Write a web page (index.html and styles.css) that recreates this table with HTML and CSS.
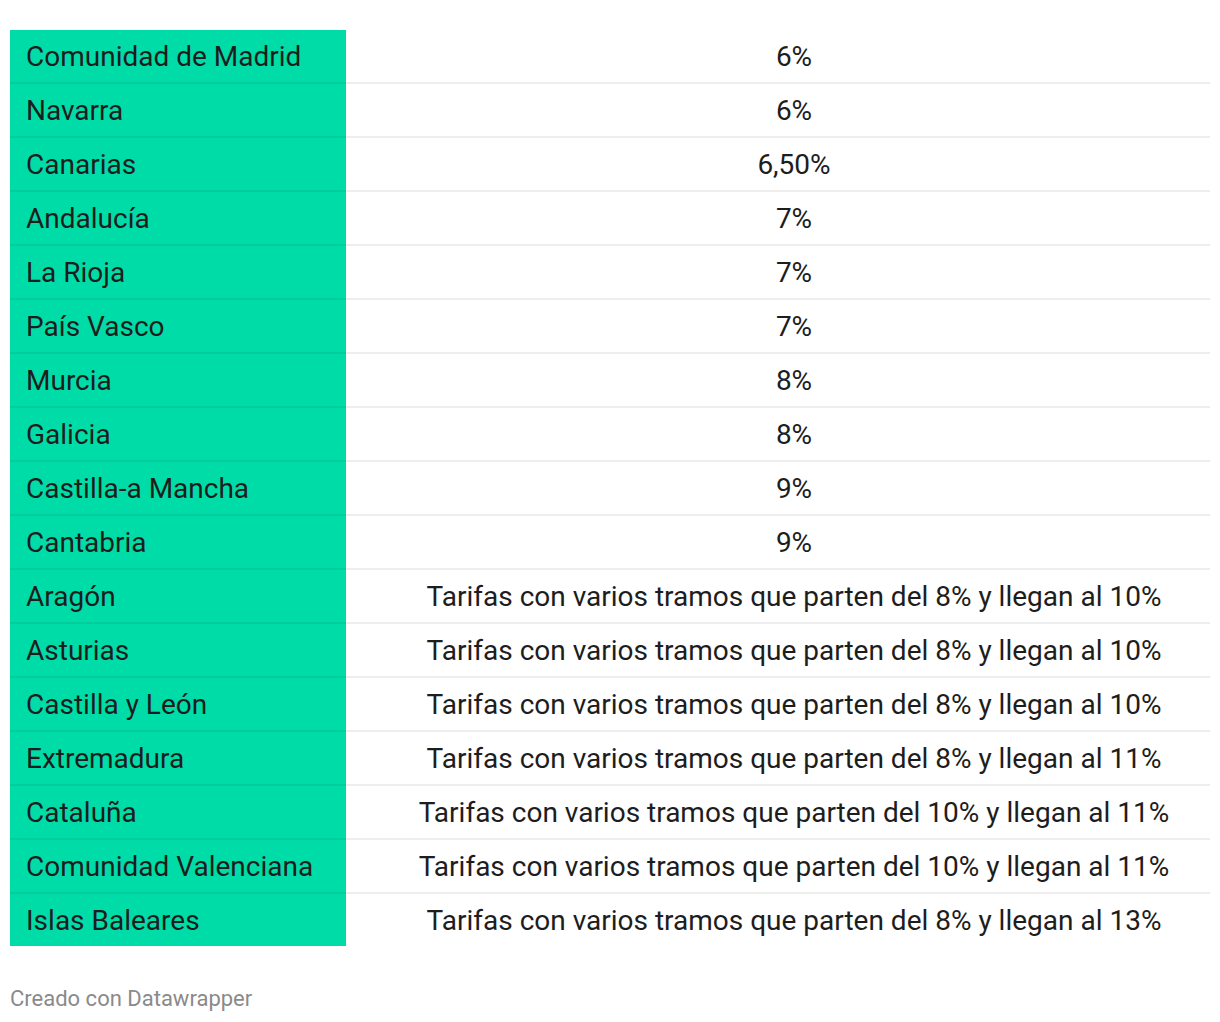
FILE: index.html
```html
<!DOCTYPE html>
<html lang="es">
<head>
<meta charset="utf-8">
<link rel="stylesheet" href="styles.css">
</head>
<body>
<div class="chart">
  <table class="tbl">
    <tbody>
      <tr><td class="name">Comunidad de Madrid</td><td class="val">6%</td></tr>
      <tr><td class="name">Navarra</td><td class="val">6%</td></tr>
      <tr><td class="name">Canarias</td><td class="val">6,50%</td></tr>
      <tr><td class="name">Andalucía</td><td class="val">7%</td></tr>
      <tr><td class="name">La Rioja</td><td class="val">7%</td></tr>
      <tr><td class="name">País Vasco</td><td class="val">7%</td></tr>
      <tr><td class="name">Murcia</td><td class="val">8%</td></tr>
      <tr><td class="name">Galicia</td><td class="val">8%</td></tr>
      <tr><td class="name">Castilla-a Mancha</td><td class="val">9%</td></tr>
      <tr><td class="name">Cantabria</td><td class="val">9%</td></tr>
      <tr><td class="name">Aragón</td><td class="val">Tarifas con varios tramos que parten del 8% y llegan al 10%</td></tr>
      <tr><td class="name">Asturias</td><td class="val">Tarifas con varios tramos que parten del 8% y llegan al 10%</td></tr>
      <tr><td class="name">Castilla y León</td><td class="val">Tarifas con varios tramos que parten del 8% y llegan al 10%</td></tr>
      <tr><td class="name">Extremadura</td><td class="val">Tarifas con varios tramos que parten del 8% y llegan al 11%</td></tr>
      <tr><td class="name">Cataluña</td><td class="val">Tarifas con varios tramos que parten del 10% y llegan al 11%</td></tr>
      <tr><td class="name">Comunidad Valenciana</td><td class="val">Tarifas con varios tramos que parten del 10% y llegan al 11%</td></tr>
      <tr><td class="name">Islas Baleares</td><td class="val">Tarifas con varios tramos que parten del 8% y llegan al 13%</td></tr>
    </tbody>
  </table>
  <div class="footer">Creado con Datawrapper</div>
</div>
</body>
</html>
```
FILE: styles.css
```css
html, body {
  margin: 0;
  padding: 0;
  background: #ffffff;
}
body {
  font-family: Roboto, "Liberation Sans", sans-serif;
  color: #1d1d1d;
}
.chart {
  padding: 30px 10px 0 10px;
}
.tbl {
  width: 1200px;
  border-collapse: collapse;
  border-spacing: 0;
}
.tbl td {
  height: 50px;
  padding: 2px 0 0 0;
  font-size: 28px;
  line-height: 50px;
  border-bottom: 2px solid rgba(0, 0, 0, 0.067);
  white-space: nowrap;
}
.tbl tr:last-child td {
  border-bottom: none;
}
.name {
  width: 320px;
  padding-left: 16px !important;
  background: #00dca7;
  text-align: left;
}
.val {
  padding-left: 32px !important;
  text-align: center;
}
.footer {
  margin-top: 41px;
  font-size: 22px;
  color: #8a8a8a;
  line-height: 24px;
}
```
